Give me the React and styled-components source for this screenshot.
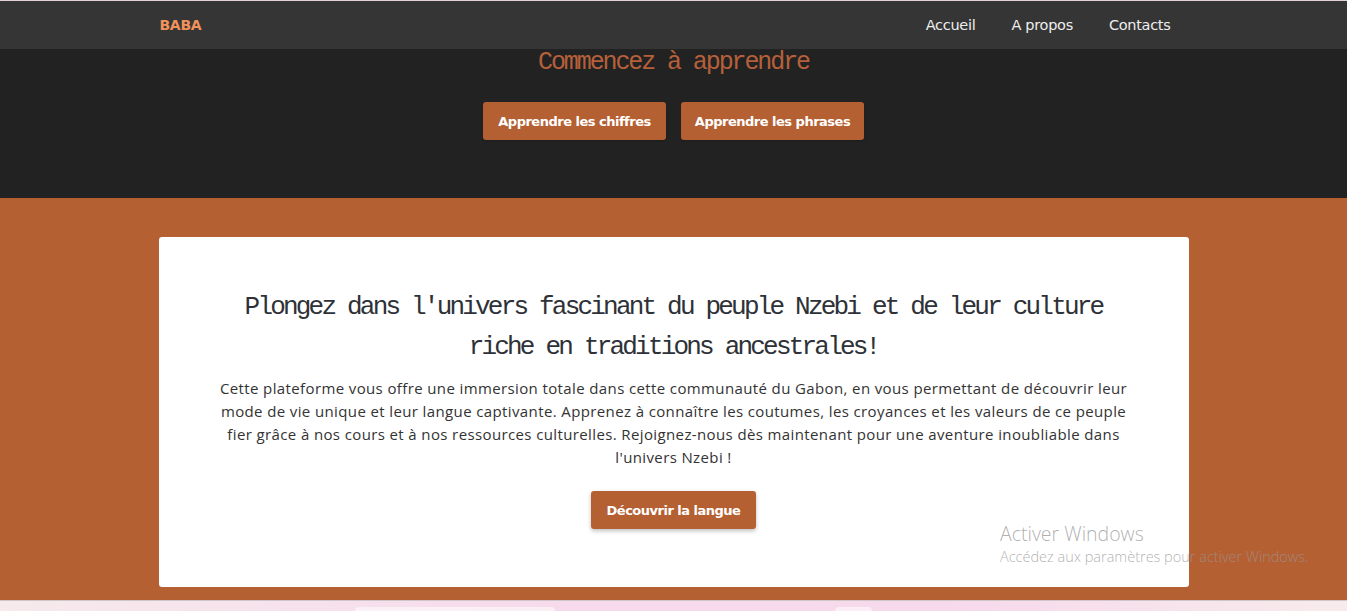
import React from "react";
import styled, { createGlobalStyle } from "styled-components";

const Global = createGlobalStyle`
  html, body { margin: 0; padding: 0; }
  body {
    background: #b56033;
    font-family: "Open Sans", "Noto Sans", sans-serif;
    overflow: hidden;
  }
  * { box-sizing: border-box; }
`;

const Page = styled.div`
  display: flex;
  flex-direction: column;
  height: 611px;
  overflow: hidden;
  position: relative;
`;

const Nav = styled.nav`
  background: #353535;
  border-top: 1px solid #e3d3d7;
  height: 49px;
  flex: none;
`;

const Container = styled.div`
  width: 1030px;
  margin: 0 auto;
  height: 100%;
  display: flex;
  align-items: center;
  justify-content: space-between;
`;

const Brand = styled.a`
  font-family: "DejaVu Sans", Verdana, sans-serif;
  font-weight: bold;
  font-size: 14px;
  color: #f0925a;
  padding-left: 1px;
  letter-spacing: -0.3px;
`;

const Links = styled.ul`
  display: flex;
  list-style: none;
  margin: 0;
  padding: 0;
`;

const Link = styled.li`
  font-family: "DejaVu Sans", Verdana, sans-serif;
  font-size: 14.5px;
  color: #eeeeee;
  padding: 0 18px;
  letter-spacing: -0.3px;
`;

const Hero = styled.section`
  background: #222222;
  height: 149px;
  flex: none;
  display: flex;
  flex-direction: column;
  align-items: center;
`;

const MonoTitle = styled.h1`
  font-family: "Liberation Mono", "Courier New", monospace;
  font-weight: normal;
  font-size: 25px;
  letter-spacing: -2.1px;
  line-height: 28px;
  color: ${(p) => p.$color || "#333"};
  margin: 0;
  text-align: center;
`;

const ButtonRow = styled.div`
  display: flex;
  gap: 15px;
  margin-top: 25px;
`;

const Button = styled.button`
  font-family: "DejaVu Sans", Verdana, sans-serif;
  font-weight: bold;
  font-size: 13px;
  letter-spacing: -0.5px;
  color: #fff;
  background: #b56033;
  border: none;
  border-radius: 3px;
  height: 38px;
  width: ${(p) => p.$w}px;
  box-shadow: ${(p) => (p.$shadow ? "0 2px 4px rgba(0,0,0,0.25)" : "0 1px 2px rgba(0,0,0,0.2)")};
  cursor: pointer;
`;

const Band = styled.section`
  flex: 1;
  background: #b56033;
  padding-top: 39px;
`;

const Card = styled.div`
  width: 1030px;
  margin: 0 auto;
  background: #fff;
  border-radius: 3px;
  padding: 50px 55px 58px;
  display: flex;
  flex-direction: column;
  align-items: center;
`;

const CardTitle = styled(MonoTitle).attrs({ as: "h2" })`
  font-size: 26px;
  line-height: 40px;
  letter-spacing: -2.8px;
  color: #2e3238;
`;

const Text = styled.p`
  font-family: "Open Sans", "Noto Sans", sans-serif;
  font-size: 15px;
  line-height: 23px;
  color: #333;
  text-align: center;
  margin: 10px 0 22px;
  letter-spacing: 0.38px;
`;

const Taskbar = styled.div`
  height: 11px;
  flex: none;
  border-top: 1px solid #cfc6c9;
  background: linear-gradient(90deg, #f6eaec 0%, #f7dbec 40%, #f7d9ec 70%, #f7ebec 100%);
  display: flex;
  align-items: flex-end;
`;

const TaskItem = styled.div`
  margin-left: ${(p) => p.$left}px;
  width: ${(p) => p.$w}px;
  height: 4px;
  border-radius: 4px 4px 0 0;
  background: rgba(255, 255, 255, 0.55);
`;

const Watermark = styled.div`
  position: absolute;
  left: 1000px;
  top: 521px;
  font-family: "Open Sans", "Noto Sans", sans-serif;
  color: rgba(150, 150, 150, 0.75);
  pointer-events: none;
`;

const WmTitle = styled.div`
  font-size: 19.5px;
  line-height: 25px;
  font-weight: 300;
`;

const WmSub = styled.div`
  font-size: 14.5px;
  line-height: 20px;
  margin-top: 1px;
  font-weight: 300;
  letter-spacing: 0px;
`;

export default function App() {
  return (
    <Page>
      <Global />
      <Nav>
        <Container>
          <Brand>BABA</Brand>
          <Links>
            <Link>Accueil</Link>
            <Link>A propos</Link>
            <Link>Contacts</Link>
          </Links>
        </Container>
      </Nav>
      <Hero>
        <MonoTitle $color="#b5603a">Commencez à apprendre</MonoTitle>
        <ButtonRow>
          <Button $w={183}>Apprendre les chiffres</Button>
          <Button $w={183}>Apprendre les phrases</Button>
        </ButtonRow>
      </Hero>
      <Band>
        <Card>
          <CardTitle>
            Plongez dans l'univers fascinant du peuple Nzebi et de leur culture riche en traditions ancestrales!
          </CardTitle>
          <Text>
            Cette plateforme vous offre une immersion totale dans cette communauté du Gabon, en vous permettant de
            découvrir leur mode de vie unique et leur langue captivante. Apprenez à connaître les coutumes, les
            croyances et les valeurs de ce peuple fier grâce à nos cours et à nos ressources culturelles.
            Rejoignez-nous dès maintenant pour une aventure inoubliable dans l'univers Nzebi !
          </Text>
          <Button $w={165} $shadow>
            Découvrir la langue
          </Button>
        </Card>
      </Band>
      <Taskbar>
        <TaskItem $left={355} $w={200} />
        <TaskItem $left={280} $w={37} />
      </Taskbar>
      <Watermark>
        <WmTitle>Activer Windows</WmTitle>
        <WmSub>Accédez aux paramètres pour activer Windows.</WmSub>
      </Watermark>
    </Page>
  );
}
